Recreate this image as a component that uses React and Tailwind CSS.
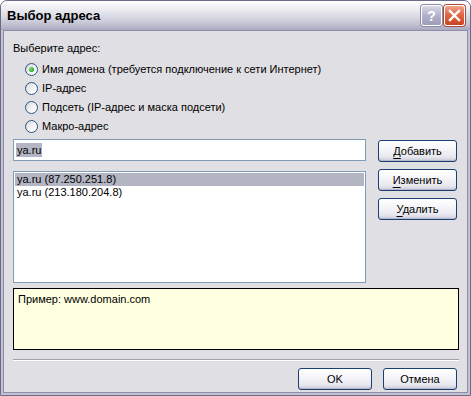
import React from "react";

function XpButton({ children, className = "" }) {
  return (
    <div
      className={
        "flex items-center justify-center rounded-[3px] border border-[#1c3f72] text-[11px] leading-[13px] text-black bg-[linear-gradient(to_bottom,#ffffff_0%,#f6f6f9_40%,#e7e7ee_80%,#c9c8d8_100%)] shadow-[inset_0_-1px_0_#b9b8cc,inset_0_1px_0_#ffffff] " +
        className
      }
    >
      {children}
    </div>
  );
}

function Mn({ c, rest }) {
  return (
    <span className="leading-[13px]">
      <span className="underline underline-offset-[3px] [text-decoration-skip-ink:none]">{c}</span>
      {rest}
    </span>
  );
}

function Radio({ checked, label }) {
  return (
    <div className="flex h-[19px] items-center">
      <div className="relative flex h-[13px] w-[13px] items-center justify-center rounded-full border border-[#2c5680] bg-[linear-gradient(135deg,#d4d4d8_0%,#f4f4f6_55%,#ffffff_100%)]">
        {checked && (
          <div className="h-[5px] w-[5px] rounded-full bg-[radial-gradient(circle_at_35%_35%,#7ee07e_0%,#2ab42a_60%,#1a8a1a_100%)]" />
        )}
      </div>
      <span className="ml-[4px] text-[11px] leading-none text-black">{label}</span>
    </div>
  );
}

export default function App() {
  return (
    <div
      className="relative flex h-[396px] w-[471px] flex-col overflow-hidden rounded-t-[7px] border border-[#6b6b88] bg-[#c2c2d4]"
      style={{ fontFamily: '"Liberation Sans", Arial, sans-serif' }}
    >
      {/* Title bar */}
      <div className="flex h-[29px] shrink-0 items-center justify-between bg-[linear-gradient(to_bottom,#ffffff_0%,#eeeef3_25%,#d9d9e4_55%,#c2c2d3_80%,#a9a9c0_100%)] pl-[6px] pr-[5px]">
        <span className="text-[13px] font-bold text-black">Выбор адреса</span>
        <div className="flex gap-[2px]">
          <div className="flex h-[21px] w-[21px] items-center justify-center rounded-[3px] border border-white bg-[linear-gradient(to_bottom,#d8d8e6_0%,#b2b2cb_50%,#9c9cb9_100%)] text-[14px] font-bold leading-none text-white shadow-[0_0_0_1px_#8c8ca8]">
            ?
          </div>
          <div className="flex h-[21px] w-[21px] items-center justify-center rounded-[3px] border border-white bg-[linear-gradient(to_bottom,#f0a38c_0%,#e06848_45%,#c8431f_100%)] shadow-[0_0_0_1px_#a84a3a]">
            <svg width="13" height="13" viewBox="0 0 13 13">
              <path d="M2 2 L11 11 M11 2 L2 11" stroke="white" strokeWidth="2.4" strokeLinecap="square" />
            </svg>
          </div>
        </div>
      </div>

      {/* Body */}
      <div className="mx-[2px] mb-[2px] flex flex-1 flex-col border border-[#8d8daa] bg-[#e0dfe3] pl-[9px] pr-[8px]">
        <div className="mt-[11px] text-[11px] leading-[13px] text-black">Выберите адрес:</div>
        <div className="mt-[5px] flex flex-col pl-[12px]">
          <Radio checked label="Имя домена (требуется подключение к сети Интернет)" />
          <Radio label="IP-адрес" />
          <Radio label="Подсеть (IP-адрес и маска подсети)" />
          <Radio label="Макро-адрес" />
        </div>

        <div className="mt-[3px] flex gap-[12px]">
          <div className="flex w-[353px] flex-col">
            <div className="flex h-[22px] items-center border border-[#7f9db9] bg-white pl-[2px]">
              <span className="bg-[#b3b5c3] px-[1px] text-[11px] leading-[14px] text-black">ya.ru</span>
            </div>
            <div className="mt-[10px] flex h-[112px] flex-col border border-[#7f9db9] bg-white p-[1px]">
              <div className="bg-[#b3b5c3] pl-[2px] text-[11px] leading-[13px] text-black">ya.ru (87.250.251.8)</div>
              <div className="pl-[2px] text-[11px] leading-[13px] text-black">ya.ru (213.180.204.8)</div>
            </div>
          </div>
          <div className="flex w-[79px] flex-col gap-[7px] pt-[1px]">
            <XpButton className="h-[22px]">
              <Mn c="Д" rest="обавить" />
            </XpButton>
            <XpButton className="h-[22px]">
              <Mn c="И" rest="зменить" />
            </XpButton>
            <XpButton className="h-[22px]">
              <Mn c="У" rest="далить" />
            </XpButton>
          </div>
        </div>

        <div className="mt-[5px] h-[62px] border border-black bg-[#ffffe1] px-[4px] pt-[4px] text-[11px] leading-[13px] text-black">
          Пример: www.domain.com
        </div>

        <div className="mt-[9px] h-[2px] border-t border-[#a0a0a8] border-b border-b-white" />

        <div className="mt-[7px] flex justify-end gap-[11px] pr-[2px]">
          <XpButton className="h-[22px] w-[74px]">OK</XpButton>
          <XpButton className="h-[22px] w-[74px]">Отмена</XpButton>
        </div>
      </div>
    </div>
  );
}
